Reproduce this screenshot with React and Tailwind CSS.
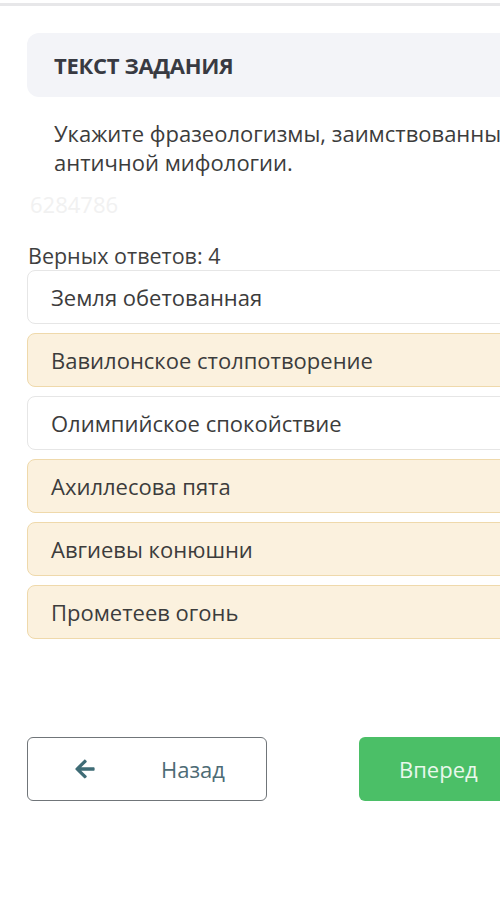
import { FaArrowLeft } from "react-icons/fa";

const options = [
  { text: "Земля обетованная", picked: false },
  { text: "Вавилонское столпотворение", picked: true },
  { text: "Олимпийское спокойствие", picked: false },
  { text: "Ахиллесова пята", picked: true },
  { text: "Авгиевы конюшни", picked: true },
  { text: "Прометеев огонь", picked: true },
];

export default function App() {
  return (
    <div
      className="w-[500px] h-[918px] overflow-hidden bg-white text-[#3c3c3c]"
      style={{ fontFamily: '"Open Sans", "Noto Sans", sans-serif' }}
    >
      <div className="h-[3px]" />
      <div className="h-[3px] bg-[#e7e7e9]" />
      <div className="pl-[27px] w-[600px]">
        <div className="mt-[27px] h-[64px] bg-[#f3f4f8] rounded-xl flex items-center pl-[27px]">
          <span className="text-[22px] font-bold text-[#383a42] tracking-[-0.3px]">ТЕКСТ ЗАДАНИЯ</span>
        </div>

        <div className="pl-[27px] mt-[22px] text-[22px] leading-[29px] whitespace-nowrap">
          <div>Укажите фразеологизмы, заимствованные из</div>
          <div>античной мифологии.</div>
        </div>

        <div className="mt-[15px] pl-[3px] text-[22px] leading-[24px] text-[#f1f1f1]">6284786</div>

        <div className="mt-[26px] pl-[1px] text-[21.5px] leading-[28px] text-[#3f3f3f]">Верных ответов: 4</div>

        <div className="flex flex-col gap-[9px]">
          {options.map((o) => (
            <div
              key={o.text}
              className={
                "h-[54px] rounded-lg border flex items-center pl-[23px] text-[22px] " +
                (o.picked
                  ? "bg-[#fbf1de] border-[#efd9ab]"
                  : "bg-white border-[#e6e6e6]")
              }
            >
              {o.text}
            </div>
          ))}
        </div>

        <div className="mt-[98px] flex gap-[92px]">
          <button className="shrink-0 w-[240px] h-[64px] rounded-md border border-[#707579] flex items-center bg-white">
            <FaArrowLeft className="ml-[46px] text-[#3f6c76] w-[22px] h-[22px]" />
            <span className="ml-[65px] text-[22px] text-[#4d6b75]">Назад</span>
          </button>
          <button className="shrink-0 w-[240px] h-[64px] rounded-md bg-[#4bbf67] flex items-center pl-[40px]">
            <span className="text-[22px] text-[#e9f8ec]">Вперед</span>
          </button>
        </div>
      </div>
    </div>
  );
}
